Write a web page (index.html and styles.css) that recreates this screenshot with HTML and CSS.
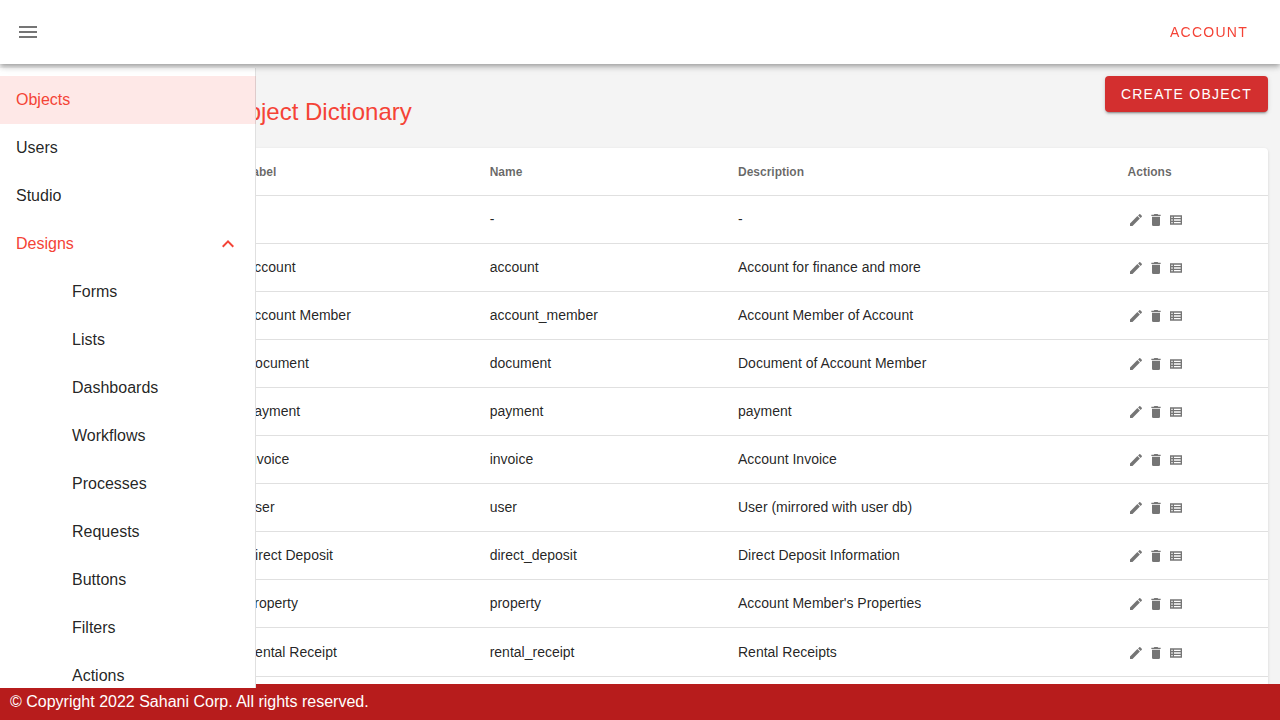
FILE: index.html
```html
<!DOCTYPE html>
<html lang="en">
<head>
<meta charset="utf-8">
<title>Object Dictionary</title>
<link rel="stylesheet" href="styles.css">
</head>
<body>
<svg class="sprite" aria-hidden="true">
  <symbol id="pencil" viewBox="0 0 24 24"><path d="M20.71 7.04c.39-.39.39-1.04 0-1.41l-2.34-2.34c-.37-.39-1.02-.39-1.41 0l-1.84 1.83 3.75 3.75M3 17.25V21h3.75L17.81 9.93l-3.75-3.75L3 17.25z"/></symbol>
  <symbol id="trash" viewBox="0 0 24 24"><path d="M19 4h-3.500l-1-1h-5l-1 1H5v2h14M6 19a2 2 0 0 0 2 2h8a2 2 0 0 0 2-2V7H6v12z"/></symbol>
  <symbol id="list" viewBox="0 0 24 24"><path d="M3 5v14h18V5H3m4 2v2H5V7h2m-2 6v-2h2v2H5m0 2h2v2H5v-2m14 2H9v-2h10v2m0-4H9v-2h10v2m0-4H9V7h10v2z"/></symbol>
</svg>
<header class="app-bar">
  <button class="icon-button" type="button" aria-label="Menu">
    <svg class="icon" viewBox="0 0 24 24"><path d="M3 6h18v2H3V6m0 5h18v2H3v-2m0 5h18v2H3v-2z"/></svg>
  </button>
  <button class="button button-text" type="button">Account</button>
</header>

<nav class="drawer" aria-label="Main">
  <a class="nav-item active" href="#">Objects</a>
  <a class="nav-item" href="#">Users</a>
  <a class="nav-item" href="#">Studio</a>
  <button class="nav-item nav-group" type="button" aria-expanded="true">Designs
    <svg class="icon" viewBox="0 0 24 24"><path d="M7.410 15.410L12 10.830l4.590 4.580L18 14l-6-6-6 6 1.410 1.410z"/></svg>
  </button>
  <a class="nav-item nested" href="#">Forms</a>
  <a class="nav-item nested" href="#">Lists</a>
  <a class="nav-item nested" href="#">Dashboards</a>
  <a class="nav-item nested" href="#">Workflows</a>
  <a class="nav-item nested" href="#">Processes</a>
  <a class="nav-item nested" href="#">Requests</a>
  <a class="nav-item nested" href="#">Buttons</a>
  <a class="nav-item nested" href="#">Filters</a>
  <a class="nav-item nested" href="#">Actions</a>
</nav>

<main class="content">
  <div class="page-head">
    <h1 class="page-title">Object Dictionary</h1>
    <button class="button button-primary" type="button">Create Object</button>
  </div>
  <div class="card">
    <table class="data-table">
      <colgroup><col class="col-label"><col class="col-name"><col class="col-description"><col class="col-actions"></colgroup>
      <thead><tr><th>Label</th><th>Name</th><th>Description</th><th>Actions</th></tr></thead>
      <tbody id="rows"></tbody>
    </table>
  </div>
</main>

<footer class="footer">© Copyright 2022 Sahani Corp. All rights reserved.</footer>
<script src="script.js"></script>
</body>
</html>
```
FILE: styles.css
```css
* { box-sizing: border-box; }

body {
  margin: 0;
  height: 100vh;
  display: flex;
  flex-direction: column;
  overflow: hidden;
  background: #f4f4f4;
  color: rgba(0, 0, 0, 0.87);
  font-family: "Liberation Sans", Arial, sans-serif;
  font-size: 16px;
  line-height: 24px;
}

button { font: inherit; border: 0; background: none; cursor: pointer; }

.sprite { display: none; }
.icon { display: block; width: 24px; height: 24px; fill: currentColor; }

.app-bar {
  position: relative;
  z-index: 3;
  flex: none;
  height: 64px;
  padding: 0 16px;
  display: flex;
  align-items: center;
  justify-content: space-between;
  background: #fff;
  box-shadow: 0 2px 4px -1px rgba(0, 0, 0, 0.2), 0 4px 5px 0 rgba(0, 0, 0, 0.14), 0 1px 10px 0 rgba(0, 0, 0, 0.12);
}

.icon-button { padding: 0; color: rgba(0, 0, 0, 0.54); }

.button {
  height: 36px;
  padding: 0 16px;
  border-radius: 4px;
  font-size: 14px;
  letter-spacing: 0.0892857em;
  text-transform: uppercase;
}
.button-text { color: #f44336; }
.button-primary {
  color: #fff;
  background: #d32f2f;
  box-shadow: 0 3px 1px -2px rgba(0, 0, 0, 0.2), 0 2px 2px 0 rgba(0, 0, 0, 0.14), 0 1px 5px 0 rgba(0, 0, 0, 0.12);
}

.drawer {
  position: fixed;
  z-index: 2;
  top: 68px;
  bottom: 32px;
  left: 0;
  width: 256px;
  padding-top: 8px;
  overflow: hidden;
  background: #fff;
}
.drawer::after {
  content: "";
  position: absolute;
  top: 0;
  right: 0;
  bottom: 0;
  width: 1px;
  background: rgba(0, 0, 0, 0.12);
}
.nav-item {
  display: flex;
  align-items: center;
  width: 100%;
  height: 48px;
  padding: 0 16px;
  color: inherit;
  text-align: left;
  text-decoration: none;
}
.nav-item.active { color: #f44336; background: #fee8e7; }
.nav-group { justify-content: space-between; color: #f44336; }
.nested { padding-left: 72px; }

.content {
  flex: 1;
  min-height: 0;
  padding: 12px 12px 0 229px;
  display: flex;
  flex-direction: column;
  overflow: hidden;
}
.page-head {
  flex: none;
  height: 72px;
  display: flex;
  justify-content: space-between;
  align-items: flex-start;
}
.page-title {
  margin: 0;
  padding-top: 20px;
  color: #f44336;
  font-size: 24px;
  font-weight: 400;
  line-height: 32px;
}

.card {
  flex: 1;
  border-radius: 4px 4px 0 0;
  background: #fff;
  box-shadow: 0 1px 3px rgba(0, 0, 0, 0.14);
}
.data-table {
  width: 100%;
  table-layout: fixed;
  border-collapse: separate;
  border-spacing: 0;
  font-size: 14px;
}
.col-label { width: 23.55%; }
.col-name { width: 23.9%; }
.col-description { width: 37.5%; }
.data-table th, .data-table td {
  height: 48px;
  padding: 0 16px;
  text-align: left;
  border-bottom: 1px solid rgba(0, 0, 0, 0.12);
}
.data-table td { padding-bottom: 1px; }
.data-table th { color: rgba(0, 0, 0, 0.6); font-size: 12px; }
.data-table tr:last-child td { height: 49px; }

.actions { display: flex; gap: 4px; padding-top: 2px; color: rgba(0, 0, 0, 0.54); }
.action { padding: 0; color: inherit; }
.action .icon { width: 16px; height: 16px; }

.footer {
  flex: none;
  height: 36px;
  padding: 6px 10px;
  color: #fff;
  background: #b71c1c;
}
```
FILE: script.js
```js
const objects = [
  ["-", "-", "-"],
  ["Account", "account", "Account for finance and more"],
  ["Account Member", "account_member", "Account Member of Account"],
  ["Document", "document", "Document of Account Member"],
  ["Payment", "payment", "payment"],
  ["Invoice", "invoice", "Account Invoice"],
  ["User", "user", "User (mirrored with user db)"],
  ["Direct Deposit", "direct_deposit", "Direct Deposit Information"],
  ["Property", "property", "Account Member's Properties"],
  ["Rental Receipt", "rental_receipt", "Rental Receipts"]
];
const actions = [["pencil", "Edit"], ["trash", "Delete"], ["list", "Fields"]];
const buttons = actions.map(([icon, label]) =>
  `<button class="action" type="button" aria-label="${label}"><svg class="icon"><use href="#${icon}"/></svg></button>`
).join("");
document.getElementById("rows").innerHTML = objects.map(row =>
  `<tr>${row.map(text => `<td>${text}</td>`).join("")}<td><div class="actions">${buttons}</div></td></tr>`
).join("");
```
